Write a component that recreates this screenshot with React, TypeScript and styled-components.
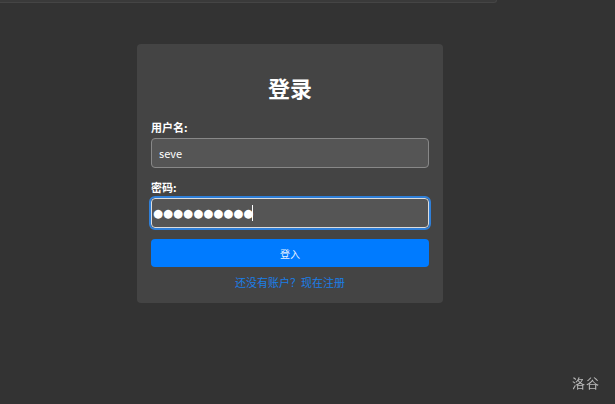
import React from 'react'
import styled, { createGlobalStyle } from 'styled-components'

const GlobalStyle = createGlobalStyle`
  html, body {
    margin: 0;
    padding: 0;
    background: #333333;
    font-family: 'Noto Sans CJK SC', 'Noto Sans', sans-serif;
  }
`

// Page shell
const Page = styled.div`
  min-height: 404px;
  display: flex;
  flex-direction: column;
`

const TopBar = styled.div`
  width: 496px;
  height: 2px;
  background: #3a3a3a;
  border-bottom: 1px solid #454545;
  border-right: 1px solid #454545;
  border-bottom-right-radius: 4px;
`

const Main = styled.main`
  width: 580px;
  display: flex;
  justify-content: center;
  padding-top: 41px;
`

const Card = styled.form`
  width: 306px;
  box-sizing: border-box;
  padding: 20px 14px 14px;
  background: #444444;
  border-radius: 4px;
  display: flex;
  flex-direction: column;
`

const Title = styled.h2`
  margin: 10px 0 20px;
  font-size: 22px;
  line-height: 26px;
  font-weight: 700;
  color: #ffffff;
  text-align: center;
`

const Label = styled.label<{ gapTop?: number }>`
  margin-top: ${({ gapTop }) => gapTop ?? 0}px;
  margin-bottom: 4px;
  font-size: 11px;
  line-height: 14px;
  font-weight: 700;
  color: #ffffff;
`

const Field = styled.div`
  position: relative;
`

const Input = styled.input<{ focused?: boolean }>`
  box-sizing: border-box;
  width: 100%;
  height: 30px;
  padding: 0 7px;
  background: #555555;
  border: 1px solid ${({ focused }) => (focused ? '#dddddd' : '#888888')};
  border-radius: 4px;
  color: #ffffff;
  font-family: ${({ focused }) =>
    focused ? "'DejaVu Sans', sans-serif" : "'Noto Sans CJK SC', 'Noto Sans', sans-serif"};
  font-size: ${({ focused }) => (focused ? '11.5px' : '11px')};
  outline: ${({ focused }) => (focused ? '2px solid #2f7fd8' : 'none')};
  outline-offset: 0;
  padding-left: ${({ focused }) => (focused ? '1px' : '7px')};
`

// text caret of the focused field
const Caret = styled.span<{ left: number }>`
  position: absolute;
  left: ${({ left }) => left}px;
  top: 7px;
  width: 1px;
  height: 16px;
  background: #ffffff;
`

const SubmitButton = styled.button`
  margin-top: 11px;
  height: 28px;
  border: none;
  border-radius: 4px;
  background: #007bff;
  color: #e8f1ff;
  font-family: 'Noto Sans CJK SC', 'Noto Sans', sans-serif;
  font-size: 10px;
  cursor: pointer;
`

const RegisterLink = styled.a`
  margin-top: 8px;
  font-size: 11px;
  line-height: 14px;
  color: #1a7fe8;
  text-align: center;
  text-decoration: none;
`

const Watermark = styled.div`
  position: fixed;
  right: 15px;
  bottom: 12px;
  font-size: 13px;
  color: #bbbbbb;
  letter-spacing: 1px;
`

const App: React.FC = () => {
  return (
    <Page>
      <GlobalStyle />
      <TopBar />
      <Main>
        <Card onSubmit={(e) => e.preventDefault()}>
          <Title>登录</Title>
          <Label htmlFor="username">用户名:</Label>
          <Input id="username" type="text" defaultValue="seve" />
          <Label htmlFor="password" gapTop={12}>
            密码:
          </Label>
          <Field>
            <Input id="password" type="text" defaultValue="●●●●●●●●●●" focused />
            <Caret left={101} />
          </Field>
          <SubmitButton type="submit">登入</SubmitButton>
          <RegisterLink href="#register">还没有账户？现在注册</RegisterLink>
        </Card>
      </Main>
      <Watermark>洛谷</Watermark>
    </Page>
  )
}

export default App
